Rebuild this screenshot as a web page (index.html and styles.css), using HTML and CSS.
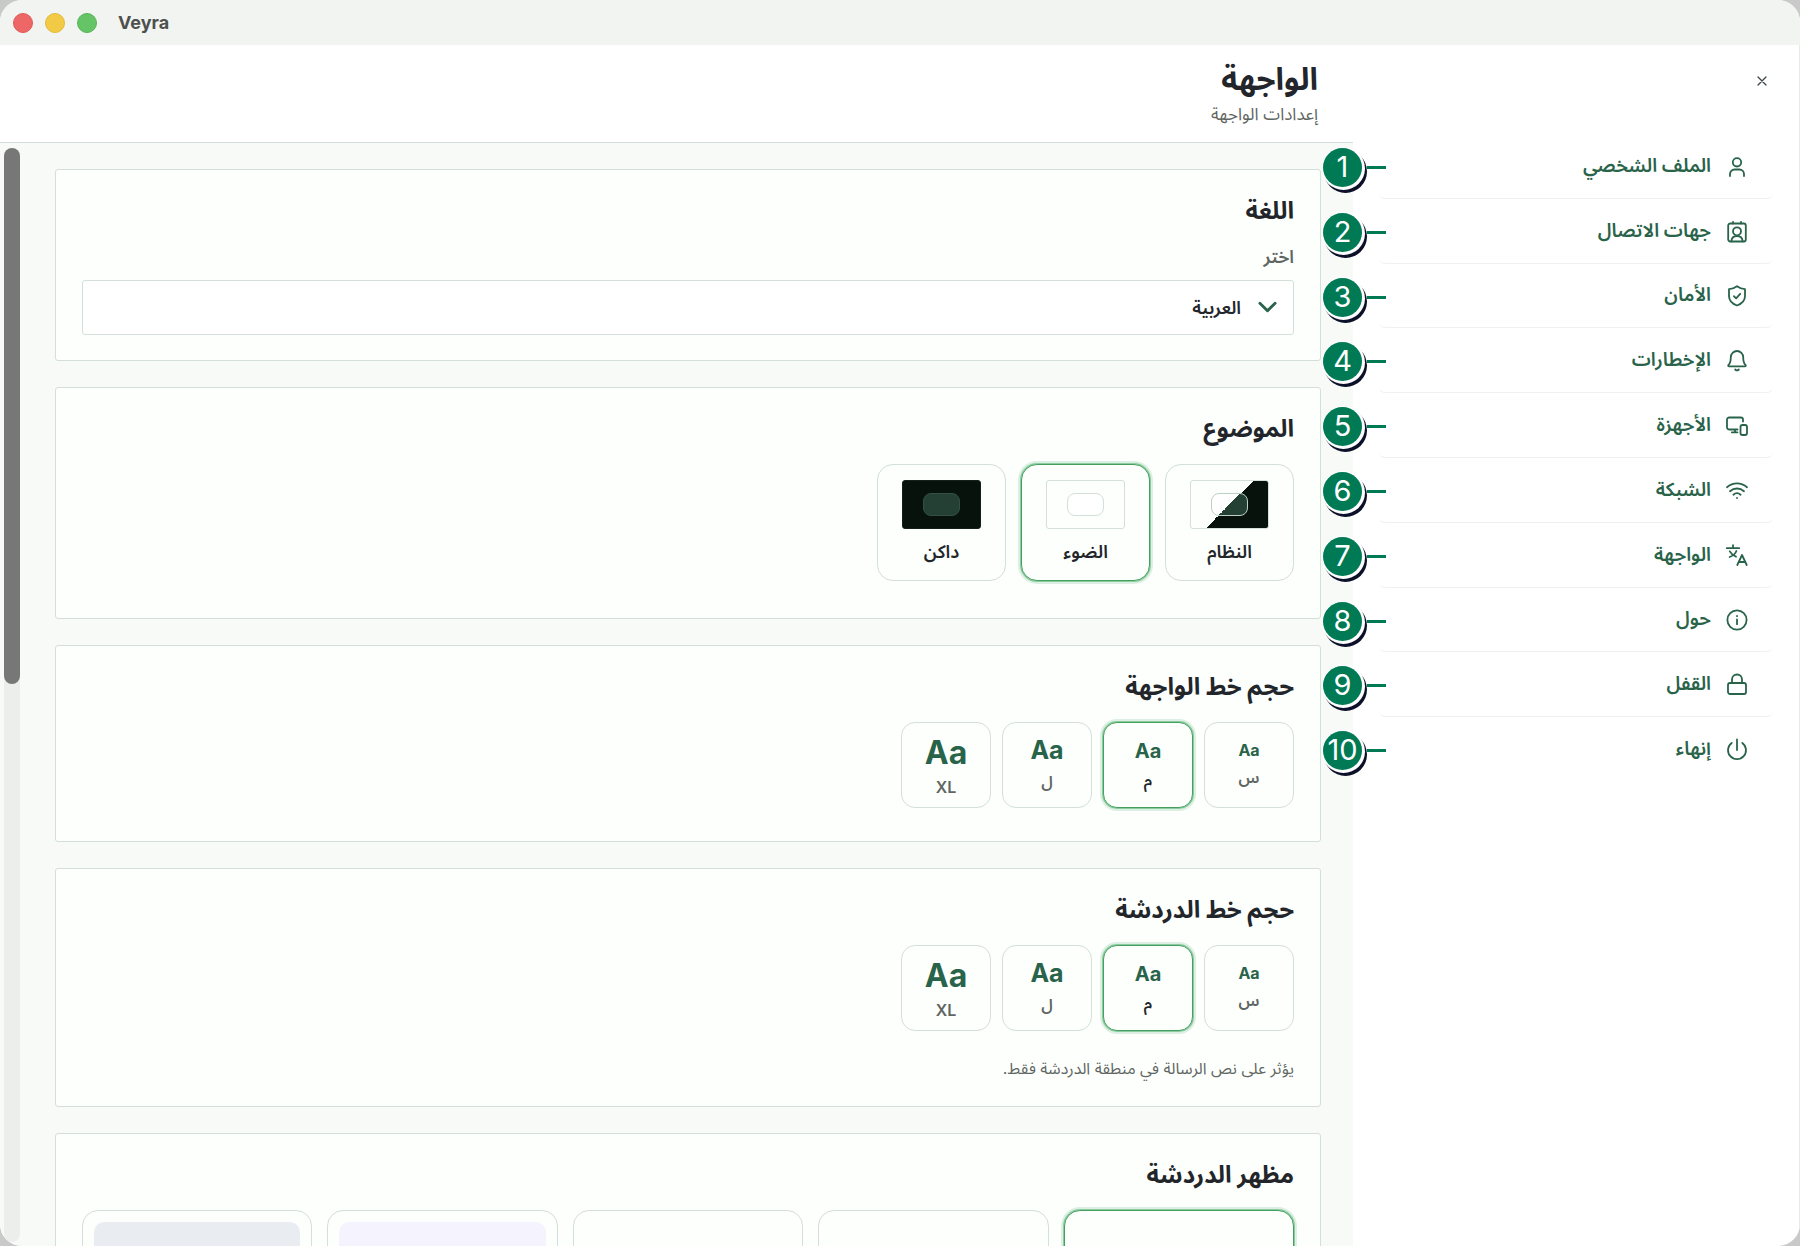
FILE: index.html
```
<!DOCTYPE html>
<html lang="ar" dir="rtl">
<head>
  <meta charset="UTF-8">
  <meta name="viewport" content="width=device-width, initial-scale=1.0">
  <title>Veyra</title>
  <link rel="stylesheet" href="styles.css">
</head>
<body>
  <div class="window">
    <header class="titlebar" dir="ltr">
      <span class="dot red"></span>
      <span class="dot yellow"></span>
      <span class="dot green"></span>
      <span class="app-name">Veyra</span>
    </header>

    <div class="layout">
      <!-- Sidebar -->
      <aside class="sidebar">
        <div class="sidebar-top">
          <button class="close" type="button" aria-label="إغلاق">
            <svg viewBox="0 0 10 10"><path d="M1 1l8 8M9 1l-8 8"/></svg>
          </button>
        </div>
        <nav>
          <ul class="menu">
            <li>
              <a href="#profile">
                <svg viewBox="0 0 24 24"><circle cx="12" cy="7.3" r="4.2"/><path d="M5 21v-2a4.5 4.5 0 0 1 4.5-4.5h5A4.5 4.5 0 0 1 19 19v2"/></svg>
                <span>الملف الشخصي</span>
              </a>
              <b class="badge">1</b>
            </li>
            <li>
              <a href="#contacts">
                <svg viewBox="0 0 24 24"><rect x="3.2" y="3.5" width="17.6" height="18" rx="2"/><path d="M8 1.8v1.7M16 1.8v1.7M6.3 21.3c.3-3 2.5-5.3 5.7-5.3s5.4 2.3 5.7 5.3"/><circle cx="12" cy="11.3" r="4"/></svg>
                <span>جهات الاتصال</span>
              </a>
              <b class="badge">2</b>
            </li>
            <li>
              <a href="#security">
                <svg viewBox="0 0 24 24"><path d="M12 2.2c2.3 1.7 4.9 2.7 8 2.9v6.9c0 4.9-3.5 7.9-8 9.5-4.5-1.6-8-4.6-8-9.5V5.1c3.1-.2 5.7-1.2 8-2.9z"/><path d="M8.9 12.2l2.2 2.1 4.1-4.5"/></svg>
                <span>الأمان</span>
              </a>
              <b class="badge">3</b>
            </li>
            <li>
              <a href="#notifications">
                <svg viewBox="0 0 24 24"><path d="M12 2a6.2 6.2 0 0 0-6.2 6.2c0 4.4-1 6.5-2.3 7.7-.6.6-.3 1.5.6 1.5h15.8c.9 0 1.2-.9.6-1.5-1.3-1.2-2.3-3.3-2.3-7.7A6.2 6.2 0 0 0 12 2z"/><path d="M10.2 20.5c1 1 2.6 1 3.6 0"/></svg>
                <span>الإخطارات</span>
              </a>
              <b class="badge">4</b>
            </li>
            <li>
              <a href="#devices">
                <svg viewBox="0 0 24 24"><path d="M18 7.5V5.7a2.2 2.2 0 0 0-2.2-2.2H4.2A2.2 2.2 0 0 0 2 5.7v7.6a2.2 2.2 0 0 0 2.2 2.2h8.3M10 15.5v2.7M6.8 18.3h5.7"/><rect x="15.5" y="11" width="6.5" height="10" rx="2"/></svg>
                <span>الأجهزة</span>
              </a>
              <b class="badge">5</b>
            </li>
            <li>
              <a href="#network">
                <svg viewBox="0 0 24 24"><path d="M2 8.2c5.9-5 14.1-5 20 0M5 12.2c4.2-3.6 9.8-3.6 14 0M8.4 15.7c2.2-1.9 5-1.9 7.2 0M12 19h.01"/></svg>
                <span>الشبكة</span>
              </a>
              <b class="badge">6</b>
            </li>
            <li>
              <a href="#interface">
                <svg viewBox="0 0 24 24"><path d="M8 1.2v2.6M1.8 4.2h12.4M4.8 7.4c1.4 2.5 3.2 4.1 6.2 5.3M11.400 7c-1 2.700-3.200 4.700-6.800 6M12.300 21L17 11l4.700 10M14 18h6"/></svg>
                <span>الواجهة</span>
              </a>
              <b class="badge">7</b>
            </li>
            <li>
              <a href="#about">
                <svg viewBox="0 0 24 24"><circle cx="12" cy="12" r="9.6"/><path d="M12 11.5v4.7M12 8v.2"/></svg>
                <span>حول</span>
              </a>
              <b class="badge">8</b>
            </li>
            <li>
              <a href="#lock">
                <svg viewBox="0 0 24 24"><rect x="3" y="10" width="18" height="11" rx="2"/><path d="M7 10V6.5a5 5 0 0 1 10 0V10"/></svg>
                <span>القفل</span>
              </a>
              <b class="badge">9</b>
            </li>
            <li>
              <a href="#quit">
                <svg viewBox="0 0 24 24"><path d="M12 1.5V12M6.7 4.9a9 9 0 1 0 10.6 0"/></svg>
                <span>إنهاء</span>
              </a>
              <b class="badge">10</b>
            </li>
          </ul>
        </nav>
      </aside>

      <!-- Settings -->
      <main class="main">
        <div class="page-head">
          <h1>الواجهة</h1>
          <p>إعدادات الواجهة</p>
        </div>

        <div class="content">
          <section class="card">
            <h2>اللغة</h2>
            <label class="field-label" for="language">اختر</label>
            <div class="select-wrap">
              <select id="language">
                <option>العربية</option>
              </select>
              <svg viewBox="0 0 20 12"><path d="M2 2l8 8 8-8"/></svg>
            </div>
          </section>

          <section class="card">
            <h2>الموضوع</h2>
            <div class="options themes">
              <button type="button" class="option theme"><span class="preview system"><i></i></span>النظام</button>
              <button type="button" class="option theme selected"><span class="preview light"><i></i></span>الضوء</button>
              <button type="button" class="option theme"><span class="preview dark"><i></i></span>داكن</button>
            </div>
          </section>

          <section class="card">
            <h2>حجم خط الواجهة</h2>
            <div class="options sizes">
              <button type="button" class="option size s"><b>Aa</b><span>س</span></button>
              <button type="button" class="option size m selected"><b>Aa</b><span>م</span></button>
              <button type="button" class="option size l"><b>Aa</b><span>ل</span></button>
              <button type="button" class="option size xl"><b>Aa</b><span>XL</span></button>
            </div>
          </section>

          <section class="card">
            <h2>حجم خط الدردشة</h2>
            <div class="options sizes">
              <button type="button" class="option size s"><b>Aa</b><span>س</span></button>
              <button type="button" class="option size m selected"><b>Aa</b><span>م</span></button>
              <button type="button" class="option size l"><b>Aa</b><span>ل</span></button>
              <button type="button" class="option size xl"><b>Aa</b><span>XL</span></button>
            </div>
            <p class="hint">يؤثر على نص الرسالة في منطقة الدردشة فقط.</p>
          </section>

          <section class="card">
            <h2>مظهر الدردشة</h2>
            <div class="looks">
              <button type="button" class="option look selected" aria-label="1"><span></span></button>
              <button type="button" class="option look" aria-label="2"><span></span></button>
              <button type="button" class="option look" aria-label="3"><span></span></button>
              <button type="button" class="option look" aria-label="4"><span class="violet"></span></button>
              <button type="button" class="option look" aria-label="5"><span class="slate"></span></button>
            </div>
          </section>
        </div>
        <div class="scrollbar"><div class="thumb"></div></div>
      </main>
    </div>
  </div>
</body>
</html>
```
FILE: styles.css
```
:root {
    --green: #28634a;
    --badge: #007a55;
    --line: #d3dfd9;
    --text: #22262b;
    --muted: #5f6662;
    --card: #fdfffd;
}

* {
    box-sizing: border-box;
}

body {
    margin: 0;
    background: #c9c9c9;
    color: var(--text);
    font-family: Inter, "Noto Sans Arabic", "Noto Sans", "DejaVu Sans", sans-serif;
}

h1, h2, p, ul {
    margin: 0;
    padding: 0;
}

button, select {
    font-family: inherit;
    color: inherit;
}

svg {
    fill: none;
    stroke: currentColor;
    stroke-linecap: round;
    stroke-linejoin: round;
}

.window {
    display: flex;
    flex-direction: column;
    height: 100vh;
    overflow: hidden;
    background: #fff;
    border-radius: 22px;
}

.titlebar {
    display: flex;
    align-items: center;
    flex: none;
    gap: 12px;
    height: 45px;
    padding: 0 13px;
    background: #f2f4f1;
}

.dot {
    width: 20px;
    height: 20px;
    border-radius: 50%;
}

.red { background: #ec6765; border: 1px solid #dd5a58; }
.yellow { background: #f3ca45; border: 1px solid #e2b93a; }
.green { background: #65c466; border: 1px solid #57b358; }

.app-name {
    margin-left: 9px;
    font-size: 18px;
    font-weight: 700;
    color: #4d504e;
}

.layout {
    display: flex;
    flex: 1;
    min-height: 0;
}

/* Sidebar */
.sidebar {
    flex: none;
    width: 447px;
    padding: 0 26px;
    border-right: 1px solid #e4ece7;
}

.sidebar-top {
    display: flex;
    height: 89px;
    padding-top: 26px;
}

.close {
    width: 22px;
    height: 20px;
    padding: 5px 6px;
    border: none;
    background: none;
    color: #3a4348;
}

.close svg {
    display: block;
    width: 10px;
    stroke-width: 1.3;
}

.menu {
    display: grid;
    grid-auto-rows: 1fr;
    min-height: 648px;
    list-style: none;
}

.menu li {
    position: relative;
    display: flex;
}

.menu a {
    display: flex;
    align-items: center;
    flex: 1;
    gap: 14px;
    padding: 2px 24px 0;
    border-bottom: 1px solid #edf2ef;
    border-radius: 6px;
    color: var(--green);
    font-size: 19px;
    font-weight: 600;
    line-height: 28px;
    text-decoration: none;
}

.menu li:last-child a {
    border-bottom-color: transparent;
}

.menu a span {
    padding-bottom: 2px;
}

.menu svg {
    width: 24px;
    height: 24px;
    stroke-width: 1.8;
}

/* Numbered marker with a pointer line */
.badge {
    position: absolute;
    top: 14px;
    left: -56px;
    width: 39px;
    height: 39px;
    border-radius: 50%;
    background: var(--badge);
    box-shadow: 1px 1px 0 2px #fff, 3px 4px 0 2px #0c1029;
    color: #fff;
    font-size: 29px;
    font-weight: 400;
    line-height: 38px;
    text-align: center;
    z-index: 1;
}

.badge::after {
    content: "";
    position: absolute;
    top: 18px;
    left: 44px;
    width: 19px;
    height: 3px;
    background: var(--badge);
}

/* Main */
.main {
    position: relative;
    display: flex;
    flex-direction: column;
    flex: 1;
    min-width: 0;
}

.page-head {
    flex: none;
    height: 98px;
    padding: 12px 35px;
    border-bottom: 1px solid var(--line);
}

.page-head h1 {
    font-size: 31px;
    line-height: 44px;
}

.page-head p {
    color: var(--muted);
    font-size: 17px;
    line-height: 26px;
}

.content {
    display: flex;
    flex-direction: column;
    flex: 1;
    gap: 26px;
    min-height: 0;
    padding: 26px 32px 0 55px;
    overflow: hidden;
    background: #f8faf8;
}

.card {
    flex: none;
    padding: 25px 26px;
    border: 1px solid var(--line);
    border-radius: 3px;
    background: var(--card);
}

.card h2 {
    margin-bottom: 19px;
    font-size: 24px;
    line-height: 32px;
}

.field-label {
    display: block;
    margin-bottom: 12px;
    color: var(--muted);
    font-size: 18px;
    font-weight: 600;
    line-height: 22px;
}

.select-wrap {
    position: relative;
}

.select-wrap select {
    width: 100%;
    height: 55px;
    padding: 0 52px;
    border: 1px solid var(--line);
    border-radius: 3px;
    background: #fff;
    font-size: 18px;
    font-weight: 600;
    appearance: none;
}

.select-wrap svg {
    position: absolute;
    top: 21px;
    right: 17px;
    width: 19px;
    height: 12px;
    color: var(--green);
    stroke-width: 3;
    pointer-events: none;
}

.options {
    display: flex;
}

.themes {
    gap: 15px;
    margin-bottom: 12px;
}

.sizes {
    gap: 11px;
    margin-bottom: 8px;
}

.option {
    border: 1px solid var(--line);
    border-radius: 16px;
    background: var(--card);
}

.option.selected {
    border-color: #45a060;
    box-shadow: 0 0 0 1px #8ccca0, 0 0 0 3px #dcefe2;
}

.theme {
    display: flex;
    flex-direction: column;
    align-items: center;
    gap: 10px;
    width: 129px;
    height: 117px;
    padding: 15px 0;
    font-size: 18px;
    font-weight: 600;
    line-height: 26px;
}

.preview {
    display: flex;
    align-items: center;
    justify-content: center;
    width: 79px;
    height: 51px;
    border: 1px solid var(--line);
    border-radius: 3px;
}

.preview i {
    width: 37px;
    height: 23px;
    border: 1px solid var(--line);
    border-radius: 8px;
    background: #fff;
}

.preview.dark {
    border-color: #14211b;
    background: #07120d;
}

.preview.dark i {
    border-color: #345045;
    background: #243f34;
}

.preview.system {
    background: linear-gradient(135deg, #fdfffd 50%, #07120d 50%);
}

.preview.system i {
    border-color: #bcd0c6;
    background: linear-gradient(135deg, #fff 50%, #243f34 50%);
}

.size {
    display: flex;
    flex-direction: column;
    align-items: center;
    justify-content: center;
    gap: 10px;
    width: 90px;
    height: 86px;
    padding: 0 0 3px;
    border-radius: 14px;
}

.size b {
    color: var(--green);
    line-height: 1.1;
}

.size span {
    color: var(--muted);
    font-size: 16px;
    font-weight: 600;
    line-height: 16px;
}

.size.selected span {
    color: var(--text);
}

.s b { font-size: 16px; }
.m b { font-size: 20px; }
.l b { font-size: 25px; }
.xl b { font-size: 32px; }

.size.xl {
    gap: 8px;
    padding-bottom: 0;
}

.hint {
    margin-top: 25px;
    color: var(--muted);
    font-size: 16px;
    line-height: 25px;
}

.looks {
    display: grid;
    grid-template-columns: repeat(5, 1fr);
    gap: 15px;
}

.look {
    height: 150px;
    padding: 11px;
}

.look span {
    display: block;
    height: 100%;
    border-radius: 10px;
}

.look .violet { background: #f5f3fd; }
.look .slate { background: #e9edf1; }

.scrollbar {
    position: absolute;
    top: 103px;
    bottom: 4px;
    left: 4px;
    width: 16px;
    border-radius: 8px;
    background: #eceeec;
}

.thumb {
    height: 49%;
    border-radius: 8px;
    background: #777;
}
```
